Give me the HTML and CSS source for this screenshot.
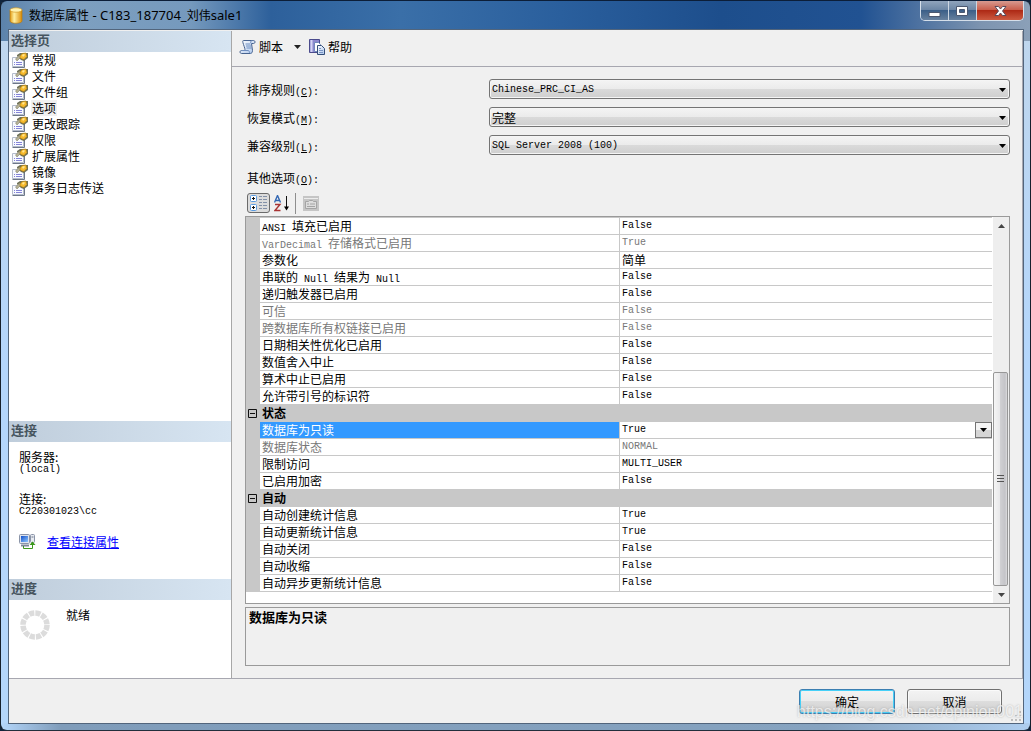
FILE: index.html
```html
<!DOCTYPE html>
<html lang="zh-CN">
<head>
<meta charset="utf-8">
<title>数据库属性 - C183_187704_刘伟sale1</title>
<link rel="stylesheet" href="styles.css">
</head>
<body>
<svg class="defs" aria-hidden="true">
  <defs>
    <linearGradient id="gold" x1="0" x2="1"><stop offset="0" stop-color="#e29a12"/><stop offset=".35" stop-color="#fff0a0"/><stop offset="1" stop-color="#d98a06"/></linearGradient>
    <linearGradient id="paper" x1="0" x2="1" y2="1"><stop offset="0" stop-color="#fff"/><stop offset="1" stop-color="#a9c4ea"/></linearGradient>
    <linearGradient id="screen" x1="0" x2="1" y2="1"><stop offset="0" stop-color="#1450c8"/><stop offset="1" stop-color="#8fc8ff"/></linearGradient>
    <symbol id="page-icon" viewBox="0 0 16 16">
      <path d="M.5 5.500h11v9H.5z" fill="#f8faff" stroke="#b4bccb"/>
      <path d="M.5 15.500h12v-8" fill="none" stroke="#6d7788"/>
      <path d="M2 10.500h1M4 10.500h6M2 12.500h1M4 12.500h6" stroke="#8484d8"/>
      <path d="M5 3l3-2h8v5l-4 3-3-1-4-4z" fill="#6f7158"/>
      <path d="M3.500 7l4-4 2.500 1-5 5z" fill="#b5b196" stroke="#77745a" stroke-width=".5"/>
      <path d="M8 4l2-2.500 4-.5 1 3.500-3 3-2-.5-2-1z" fill="#f6b92c" stroke="#9c7414" stroke-width=".6"/>
      <path d="M10 3l2-1 1 1-2 2z" fill="#ffe691"/>
    </symbol>
  </defs>
</svg>
<div class="window">
  <header class="titlebar">
    <svg width="14" height="17" viewBox="0 0 14 17"><path d="M1 3v11c0 3 12 3 12 0V3z" fill="url(#gold)" stroke="#b87d12" stroke-width=".7"/><ellipse cx="7" cy="3" rx="6" ry="2.200" fill="#fff2b0" stroke="#d39a25" stroke-width=".7"/></svg>
    <h1>数据库属性<span> - C183_187704_</span>刘伟<span>sale1</span></h1>
    <div class="caption">
      <button class="cap" aria-label="最小化"><svg width="13" height="12" viewBox="0 0 13 12"><path d="M1 7.500h11v4H1z" fill="#fff" stroke="#4c5870"/></svg></button>
      <button class="cap" aria-label="最大化"><svg width="13" height="12" viewBox="0 0 13 12"><path fill-rule="evenodd" d="M.5 1.500h11v9H.5zM3.500 4.500v3h5v-3z" fill="#fff" stroke="#4c5870"/></svg></button>
      <button class="cap close" aria-label="关闭"><svg width="13" height="12" viewBox="0 0 13 12"><path d="M1 1.500h3.500l2 2.500 2-2.500H12L8.500 6l3.500 4.500H8.500l-2-2.500-2 2.500H1L4.500 6z" fill="#fff" stroke="#5a4a5a"/></svg></button>
    </div>
  </header>
  <main class="client">
    <div class="body">
      <aside class="side">
        <section class="pages">
          <h2>选择页</h2>
          <ul>
            <li><svg width="16" height="16"><use href="#page-icon"/></svg><span>常规</span></li>
            <li><svg width="16" height="16"><use href="#page-icon"/></svg><span>文件</span></li>
            <li><svg width="16" height="16"><use href="#page-icon"/></svg><span>文件组</span></li>
            <li><svg width="16" height="16"><use href="#page-icon"/></svg><span class="current">选项</span></li>
            <li><svg width="16" height="16"><use href="#page-icon"/></svg><span>更改跟踪</span></li>
            <li><svg width="16" height="16"><use href="#page-icon"/></svg><span>权限</span></li>
            <li><svg width="16" height="16"><use href="#page-icon"/></svg><span>扩展属性</span></li>
            <li><svg width="16" height="16"><use href="#page-icon"/></svg><span>镜像</span></li>
            <li><svg width="16" height="16"><use href="#page-icon"/></svg><span>事务日志传送</span></li>
          </ul>
        </section>
        <section class="connection">
          <h2>连接</h2>
          <dl>
            <dt>服务器:</dt><dd>(local)</dd>
            <dt>连接:</dt><dd>C220301023\cc</dd>
          </dl>
          <div class="link-row">
            <svg width="17" height="16" viewBox="0 0 17 16"><rect x=".5" y=".5" width="10" height="9" rx="1" fill="#dfe4ee" stroke="#8a94a8"/><rect x="2" y="2" width="7" height="6" fill="url(#screen)"/><path d="M2 11.500h8" stroke="#7d879a" stroke-width="2"/><rect x="11.500" y=".5" width="4" height="8" rx="1" fill="#e8ebf1" stroke="#8a94a8"/><path d="M12.500 3h2" stroke="#6d778a"/><path d="M4.500 12v2.500h9V10" fill="none" stroke="#3b981c"/><path d="M10.500 11l3-3.500 3 3.500z" fill="#3b981c"/></svg>
            <a href="#connection">查看连接属性</a>
          </div>
        </section>
        <section class="progress">
          <h2>进度</h2>
          <div class="status">
            <svg width="30" height="30" viewBox="0 0 30 30"><circle cx="15" cy="15" r="12" fill="none" stroke="#dcdcdc" stroke-width="5.500" stroke-dasharray="5.200 1.083"/></svg>
            <span>就绪</span>
          </div>
        </section>
      </aside>
      <section class="content">
        <div class="toolbar">
          <button class="tool"><svg width="17" height="16" viewBox="0 0 17 16"><path d="M4.500 1.500h10c2 0 2 3 0 3h-2l1 7c0 2-1 3-2 3h-9c-2 0-2-3 0-3h3c1-1 0-3-1-6s-1-4 0-4z" fill="url(#paper)" stroke="#47638f"/><path d="M6.500 5h5M7 7h5M7.500 9h5M2.500 11.500h7c1 1 1 2.500 2 3M12.500 4.500c-1.500-.5-1-3 1-3" fill="none" stroke="#6f8fc0"/></svg><span>脚本</span><svg class="drop" width="7" height="4" viewBox="0 0 7 4"><path d="M0 0h7L3.500 4z" fill="#222"/></svg></button>
          <button class="tool"><svg width="16" height="16" viewBox="0 0 16 16"><path d="M.5.500h10v13H.5z" fill="#8c89ce" stroke="#4b4b8c"/><path d="M2.500 1v12" stroke="#d5d5f4" stroke-width="2"/><path d="M5.500 3.500h4l2 2v7h-6z" fill="#fff" stroke="#718abc"/><path d="M8.500 6.500h4l3 3v6h-7z" fill="url(#paper)" stroke="#344e78"/><path d="M10 9.500h2M10 11.500h4M10 13.500h4" stroke="#7894c4"/></svg><span>帮助</span></button>
        </div>
        <div class="options">
          <div class="field"><label for="collation">排序规则<span class="en">(<u>C</u>):</span></label><div class="combo"><select id="collation" class="en"><option>Chinese_PRC_CI_AS</option></select><svg width="7" height="4" viewBox="0 0 7 4"><path d="M0 0h7L3.500 4z"/></svg></div></div>
          <div class="field"><label for="recovery">恢复模式<span class="en">(<u>M</u>):</span></label><div class="combo"><select id="recovery"><option>完整</option></select><svg width="7" height="4" viewBox="0 0 7 4"><path d="M0 0h7L3.500 4z"/></svg></div></div>
          <div class="field"><label for="compat">兼容级别<span class="en">(<u>L</u>):</span></label><div class="combo"><select id="compat" class="en"><option>SQL Server 2008 (100)</option></select><svg width="7" height="4" viewBox="0 0 7 4"><path d="M0 0h7L3.500 4z"/></svg></div></div>
          <p class="other">其他选项<span class="en">(<u>O</u>):</span></p>
          <div class="grid-tools">
            <button class="pressed" aria-label="按分类顺序"><svg width="18" height="16" viewBox="0 0 18 16"><rect x=".5" y=".5" width="6" height="6" rx="1" fill="#fff" stroke="#5a9be0"/><rect x=".5" y="9.500" width="6" height="6" rx="1" fill="#fff" stroke="#5a9be0"/><path d="M2 3.500h3M3.500 2v3M2 12.500h3M3.500 11v3" stroke="#111"/><path d="M9 1.500h3M13 1.500h4M9 4.500h3M13 4.500h4M9 7.500h3M13 7.500h4M9 10.500h3M13 10.500h4M9 13.500h3M13 13.500h4" stroke="#8391a8"/></svg></button>
            <button aria-label="字母顺序"><svg width="16" height="17" viewBox="0 0 16 17"><path d="M.5 7.500L3.500.500l3 7M1.500 5.500h4" fill="none" stroke="#3267b3" stroke-width="1.400"/><path d="M1 9.500h5l-5 6h5.500" fill="none" stroke="#a83434" stroke-width="1.400"/><path d="M12.500 1v12" stroke="#111"/><path d="M10 11.500h5l-2.500 4z"/></svg></button>
            <span class="divider"></span>
            <button aria-label="属性页" disabled><svg width="16" height="15" viewBox="0 0 16 15"><rect width="16" height="15" fill="#c5c5c5"/><path d="M1 2.500h14" stroke="#ededed"/><path d="M2.500 12.500v-7h3l1-1h3l1 1h3v7z" fill="#ddd" stroke="#a4a4a4"/><path d="M4 8h2M7 8h5M4 10.500h8" stroke="#a4a4a4"/></svg></button>
          </div>
          <div class="grid">
            <table>
              <colgroup><col class="c-gutter"><col class="c-name"><col></colgroup>
              <tbody>
                <tr><td class="gutter"></td><td><span class="en">ANSI </span>填充已启用</td><td class="en">False</td></tr>
                <tr class="off"><td class="gutter"></td><td><span class="en">VarDecimal </span>存储格式已启用</td><td class="en">True</td></tr>
                <tr><td class="gutter"></td><td>参数化</td><td>简单</td></tr>
                <tr><td class="gutter"></td><td>串联的<span class="en"> Null </span>结果为<span class="en"> Null</span></td><td class="en">False</td></tr>
                <tr><td class="gutter"></td><td>递归触发器已启用</td><td class="en">False</td></tr>
                <tr class="off"><td class="gutter"></td><td>可信</td><td class="en">False</td></tr>
                <tr class="off"><td class="gutter"></td><td>跨数据库所有权链接已启用</td><td class="en">False</td></tr>
                <tr><td class="gutter"></td><td>日期相关性优化已启用</td><td class="en">False</td></tr>
                <tr><td class="gutter"></td><td>数值舍入中止</td><td class="en">False</td></tr>
                <tr><td class="gutter"></td><td>算术中止已启用</td><td class="en">False</td></tr>
                <tr><td class="gutter"></td><td>允许带引号的标识符</td><td class="en">False</td></tr>
                <tr class="cat"><td class="gutter"><svg width="9" height="9" viewBox="0 0 9 9"><path d="M.5.500h8v8h-8zM2 4.500h5" fill="none" stroke="#111"/></svg></td><th colspan="2">状态</th></tr>
                <tr class="selected"><td class="gutter"></td><td>数据库为只读</td><td><div class="edit"><span class="en">True</span><button aria-label="展开"><svg width="7" height="4" viewBox="0 0 7 4"><path d="M0 0h7L3.500 4z"/></svg></button></div></td></tr>
                <tr class="off"><td class="gutter"></td><td>数据库状态</td><td class="en">NORMAL</td></tr>
                <tr><td class="gutter"></td><td>限制访问</td><td class="en">MULTI_USER</td></tr>
                <tr><td class="gutter"></td><td>已启用加密</td><td class="en">False</td></tr>
                <tr class="cat"><td class="gutter"><svg width="9" height="9" viewBox="0 0 9 9"><path d="M.5.500h8v8h-8zM2 4.500h5" fill="none" stroke="#111"/></svg></td><th colspan="2">自动</th></tr>
                <tr><td class="gutter"></td><td>自动创建统计信息</td><td class="en">True</td></tr>
                <tr><td class="gutter"></td><td>自动更新统计信息</td><td class="en">True</td></tr>
                <tr><td class="gutter"></td><td>自动关闭</td><td class="en">False</td></tr>
                <tr><td class="gutter"></td><td>自动收缩</td><td class="en">False</td></tr>
                <tr><td class="gutter"></td><td>自动异步更新统计信息</td><td class="en">False</td></tr>
              </tbody>
            </table>
            <div class="scrollbar">
              <svg width="7" height="4" viewBox="0 0 7 4"><path d="M0 4h7L3.500 0z" fill="#444"/></svg>
              <div class="track"><div class="thumb"><i></i><i></i><i></i></div></div>
              <svg width="7" height="4" viewBox="0 0 7 4"><path d="M0 0h7L3.500 4z" fill="#444"/></svg>
            </div>
          </div>
          <div class="description">数据库为只读</div>
        </div>
      </section>
    </div>
    <footer class="actions">
      <button class="push default">确定</button>
      <button class="push">取消</button>
      <svg class="grip" width="11" height="11" viewBox="0 0 11 11"><path d="M8 0h2v2H8zM4 4h2v2H4zM8 4h2v2H8zM0 8h2v2H0zM4 8h2v2H4zM8 8h2v2H8z" fill="#bdbdbd"/></svg>
      <span class="watermark">https://blog.csdn.net/opinion001</span>
    </footer>
  </main>
</div>
</body>
</html>
```

FILE: styles.css
```css
* { box-sizing: border-box; }
body, h1, h2, ul, dl, dd, p { margin: 0; padding: 0; }
body {
  font: 12px/16px "Noto Sans CJK SC", sans-serif;
  color: #000;
  background: #10243c;
}
button, select { font: inherit; color: inherit; margin: 0; padding: 0; border: 0; background: none; }
svg { flex: none; display: block; }
.defs { position: absolute; width: 0; height: 0; }
.en { font-family: "Liberation Mono", "Noto Sans CJK SC", monospace; font-size: 10px; white-space: pre; }
span.en { line-height: 10px; }

/* window frame */
.window {
  height: 100vh;
  min-height: 720px;
  display: flex;
  flex-direction: column;
  padding: 0 6px 6px 7px;
  border: 1px solid #16202c;
  border-top-color: #0c1e38;
  border-bottom-color: #222e3c;
  border-radius: 7px;
  background:
    linear-gradient(90deg, #5c83ab 0, #7ea0c0 70px, #7599bd 190px, #2d609b 270px, #3a6fa8 400px, #2a5f9d 560px, #1d4e8c 720px, #215292 860px, #7d94b0 980px, #8ba0b8 100%) 0 0 / 100% 40px no-repeat,
    linear-gradient(90deg, #b4d6fa 0, #7f9cba 60px, #86a3c0 80%, #aecdee 100%) 0 100% / 100% 7px no-repeat,
    linear-gradient(#c0d6ec, #b4d6fc 50%, #b4d6fa);
}
.titlebar { height: 28px; flex: none; display: flex; align-items: center; gap: 6px; padding-left: 1px; }
.titlebar h1 { flex: 1; font: 12px/16px "Noto Sans CJK SC", sans-serif; }
.titlebar h1 span { font: 13px/13px "Noto Sans", sans-serif; }
.caption { align-self: flex-start; display: flex; border: 1px solid #d5dfea; border-top: 0; border-radius: 0 0 5px 5px; overflow: hidden; }
.cap { width: 28px; height: 19px; display: flex; align-items: center; justify-content: center; background: linear-gradient(#90a4bc 0, #6d87a6 45%, #3c5f88 50%, #67819e 100%); border-right: 1px solid #ccd6e2; }
.close { width: 46px; border-right: 0; background: linear-gradient(#d79a90 0, #c9604e 45%, #ae2a16 50%, #cc5a40 100%); }

.client { flex: 1; display: flex; flex-direction: column; min-height: 0; border-top: 1px solid #465467; background: #f0f0f0; outline: 1px solid #52657c; outline-offset: -1px; padding: 1px; }
.body { flex: 1; display: flex; min-height: 0; border-bottom: 1px solid #a7a7b0; }

/* left column */
.side { width: 223px; flex: none; display: flex; flex-direction: column; background: #fff; border-right: 1px solid #a7a7a7; }
.side h2 { font-size: 13px; line-height: 18px; height: 21px; padding-left: 2px; color: #46545e; background: linear-gradient(90deg, #bfcddb, #d7e5f2); }
.pages { flex: 1; }
.pages ul { list-style: none; padding-left: 3px; }
.pages li { display: flex; gap: 3px; height: 16px; }
.pages li span { padding: 0 1px; }
.pages .current { background: #f0f0f0; }
.connection { height: 158px; }
.connection dl { padding: 8px 10px 0; line-height: 14px; }
.connection dd { font: 10px/12px "Liberation Mono", monospace; margin-bottom: 16px; }
.link-row { display: flex; align-items: center; gap: 11px; padding-left: 10px; }
.link-row a { color: #00f; }
.progress { height: 99px; }
.status { display: flex; align-items: flex-start; gap: 16px; padding: 7px 11px; }
.status svg { margin-top: 3px; }

/* right column */
.content { flex: 1; min-width: 0; display: flex; flex-direction: column; border-right: 1px solid #a7a7b0; }
.toolbar { height: 36px; flex: none; display: flex; align-items: center; gap: 8px; padding: 0 7px 3px; border-bottom: 1px solid #a7a7b0; }
.tool { display: flex; align-items: center; gap: 3px; }
.drop { margin-left: 8px; }
.options { flex: 1; min-height: 0; display: flex; flex-direction: column; padding: 12px 12px 12px 13px; }
.field { display: flex; align-items: center; height: 20px; margin-bottom: 8px; }
.field label { width: 244px; flex: none; padding: 2px 0 0 2px; }
.combo { flex: 1; display: grid; align-items: center; }
.combo select { grid-area: 1 / 1; width: 100%; height: 20px; appearance: none; padding: 1px 0 0 2px; border: 1px solid #747474; border-radius: 3px; background: linear-gradient(#f4f4f4 0, #ebebeb 49%, #dadada 50%, #cfcfcf 100%); box-shadow: inset 0 0 0 1px #f5f5f5; }
.combo svg { grid-area: 1 / 1; justify-self: end; margin: 2px 4px 0 0; pointer-events: none; }
.other { padding: 7px 2px 6px; }
.grid-tools { display: flex; align-items: center; height: 22px; margin: 0 0 2px 2px; flex: none; }
.grid-tools button { height: 20px; width: 23px; display: flex; align-items: center; justify-content: center; }
.grid-tools .pressed { border: 1px solid #6b6b6b; border-radius: 3px; background: #dcdcdc; }
.divider { width: 1px; height: 21px; margin: 0 3px 0 2px; background: #8e8e8e; }

.grid { flex: 1; min-height: 0; display: flex; gap: 1px; align-items: flex-start; background: #fff; border: 1px solid #9a9a9a; overflow: hidden; }
table { flex: 1; min-width: 0; table-layout: fixed; border-collapse: separate; border-spacing: 0; border-top: 1px solid #c8c8c8; }
.c-gutter { width: 14px; }
.c-name { width: 360px; }
td, th { height: 17px; padding: 0 2px; line-height: 16px; white-space: nowrap; overflow: hidden; text-align: left; border-bottom: 1px solid #c8c8c8; }
td:nth-child(2) { border-right: 1px solid #c8c8c8; }
td.gutter { background: #c8c8c8; }
.off { color: #777; }
.cat th { background: #c8c8c8; }
.selected td:nth-child(2) { background: #3399ff; color: #fff; }
.selected td:last-child { padding-right: 0; }
.edit { display: flex; justify-content: space-between; height: 16px; }
.edit span.en { line-height: 16px; }
.edit button { width: 17px; height: 16px; display: flex; align-items: center; justify-content: center; border: 1px solid #747474; background: linear-gradient(#f4f4f4 50%, #d5d5d5 51%); }
.scrollbar { width: 16px; align-self: stretch; display: flex; flex-direction: column; align-items: center; padding: 7px 0 6px; gap: 7px; background: #eeeeee; }
.track { flex: 1; width: 100%; display: flex; align-items: flex-end; }
.thumb { width: 15px; height: 61%; display: flex; flex-direction: column; align-items: center; justify-content: center; gap: 2px; border: 1px solid #979797; border-radius: 2px; background: linear-gradient(90deg, #f5f5f5 0, #e8e8ea 45%, #cfcfd2 50%, #c4c4c8 85%, #dcdcde); }
.thumb i { width: 7px; height: 1px; background: #555; }
.description { height: 59px; flex: none; margin-top: 3px; padding: 1px 3px; font-size: 13px; font-weight: bold; border: 1px solid #9a9a9a; }

/* bottom buttons */
.actions { position: relative; height: 44px; flex: none; display: flex; justify-content: flex-end; align-items: flex-start; gap: 12px; padding: 10px 21px 0; }
.push { width: 95px; height: 25px; border: 1px solid #707070; border-radius: 3px; background: linear-gradient(#f3f3f3 0, #ebebeb 49%, #dddddd 50%, #cfcfcf 100%); box-shadow: inset 0 0 0 1px #fafafa; }
.default { width: 96px; border-color: #3c7fb1; box-shadow: inset 0 0 0 1px #46d0f8; }
.grip { position: absolute; right: 1px; bottom: 1px; }
.watermark { position: absolute; right: 0; bottom: 0; font: 16px/22px "Liberation Sans", sans-serif; color: rgba(255, 255, 255, .7); text-shadow: 0 0 2px rgba(120, 120, 120, .5); pointer-events: none; white-space: nowrap; }
```
